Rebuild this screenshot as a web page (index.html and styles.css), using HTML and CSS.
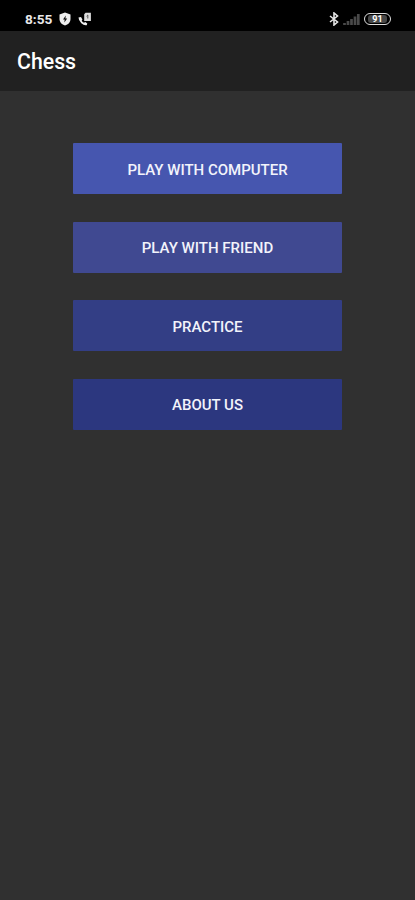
FILE: index.html
```html
<!DOCTYPE html>
<html lang="en">
<head>
<meta charset="utf-8">
<title>Chess</title>
<link rel="stylesheet" href="styles.css">
</head>
<body>
<div class="status">
  <span class="time">8:55</span>
  <svg class="shield" viewBox="0 0 12 14" width="12" height="14"><path d="M6 .5 11.5 2.5V7C11.5 10.5 9 12.5 6 13.5 3 12.5.5 10.5.5 7V2.5Z" fill="#eee"/><path d="M6.8 3.5 4 7.5H5.7L5.3 10.5 8.2 6.5H6.4Z" fill="#111"/></svg>
  <svg class="call" viewBox="0 0 14 14" width="14" height="14"><path d="M.5 5.5 3 5 4.4 7.5 3.7 8.7Q4.5 10.2 6 10.8L7.3 10 9.3 11.4 8.7 13.2Q6 13.8 3.3 11.2.5 8.4.5 5.5Z" fill="#eee"/><path d="M7.5 .8H12.9V9H6.2V2.2Z" fill="#ddd"/><path d="M9.8 3V6.5M8.6 4.2 9.8 3" stroke="#555" fill="none"/></svg>
  <span class="spacer"></span>
  <svg class="bluetooth" viewBox="0 0 10 14" width="10" height="14"><path d="M1 4 8.5 10 5 13V1L8.5 4 1 10" fill="none" stroke="#e5e5e5" stroke-width="1.6"/></svg>
  <svg class="signal" viewBox="0 0 17 13" width="17" height="13"><path d="M1.5 12V10M5 12V8M8.5 12V6M12 12V3.5M15.3 12V1" stroke="#494949" stroke-width="2.7"/></svg>
  <span class="battery"><span class="level">91</span></span>
</div>
<header class="appbar"><h1 class="title">Chess</h1></header>
<main class="menu">
  <button class="item computer">PLAY WITH COMPUTER</button>
  <button class="item friend">PLAY WITH FRIEND</button>
  <button class="item practice">PRACTICE</button>
  <button class="item about">ABOUT US</button>
</main>
</body>
</html>
```
FILE: styles.css
```css
* { box-sizing: border-box; }
body {
  margin: 0;
  height: 900px;
  overflow: hidden;
  background: #303030;
  color: #fff;
  font-family: Roboto, "Liberation Sans", sans-serif;
}
.status {
  display: flex;
  align-items: center;
  height: 31px;
  padding: 7px 24px 0 25px;
  background: #000;
}
.time {
  width: 34px;
  font-size: 13.6px;
  font-weight: 700;
  line-height: 16px;
  color: #e8e8e8;
}
.call { margin-left: 7px; }
.spacer { flex: 1; }
.signal { margin: 0 4px; }
.battery {
  display: flex;
  align-items: center;
  justify-content: center;
  width: 27px;
  height: 12px;
  padding: 1px 2px;
  border: 1.5px solid #ddd;
  border-radius: 6px;
}
.level {
  width: 19px;
  border-radius: 3px;
  background: #484848;
  text-align: center;
  font-size: 9px;
  font-weight: 700;
  line-height: 8px;
  color: #fff;
}
.appbar {
  display: flex;
  align-items: center;
  height: 60px;
  padding: 2px 17px 0;
  background: #212121;
}
.title {
  margin: 0;
  font-size: 21.3px;
  font-weight: 500;
  line-height: 26px;
}
.menu {
  display: flex;
  flex-direction: column;
  gap: 27.6px;
  width: 269px;
  margin: 52.3px 0 0 73px;
}
.item {
  height: 51px;
  padding: 2px 0 0;
  border: 0;
  border-radius: 1px;
  color: #f2f3fb;
  font: 500 15px/20px Roboto, "Liberation Sans", sans-serif;
}
.computer { background: #4656af; }
.friend { background: #404991; }
.practice { background: #333e85; }
.about {
  padding-top: 1px;
  background: #2c377f;
}
```
